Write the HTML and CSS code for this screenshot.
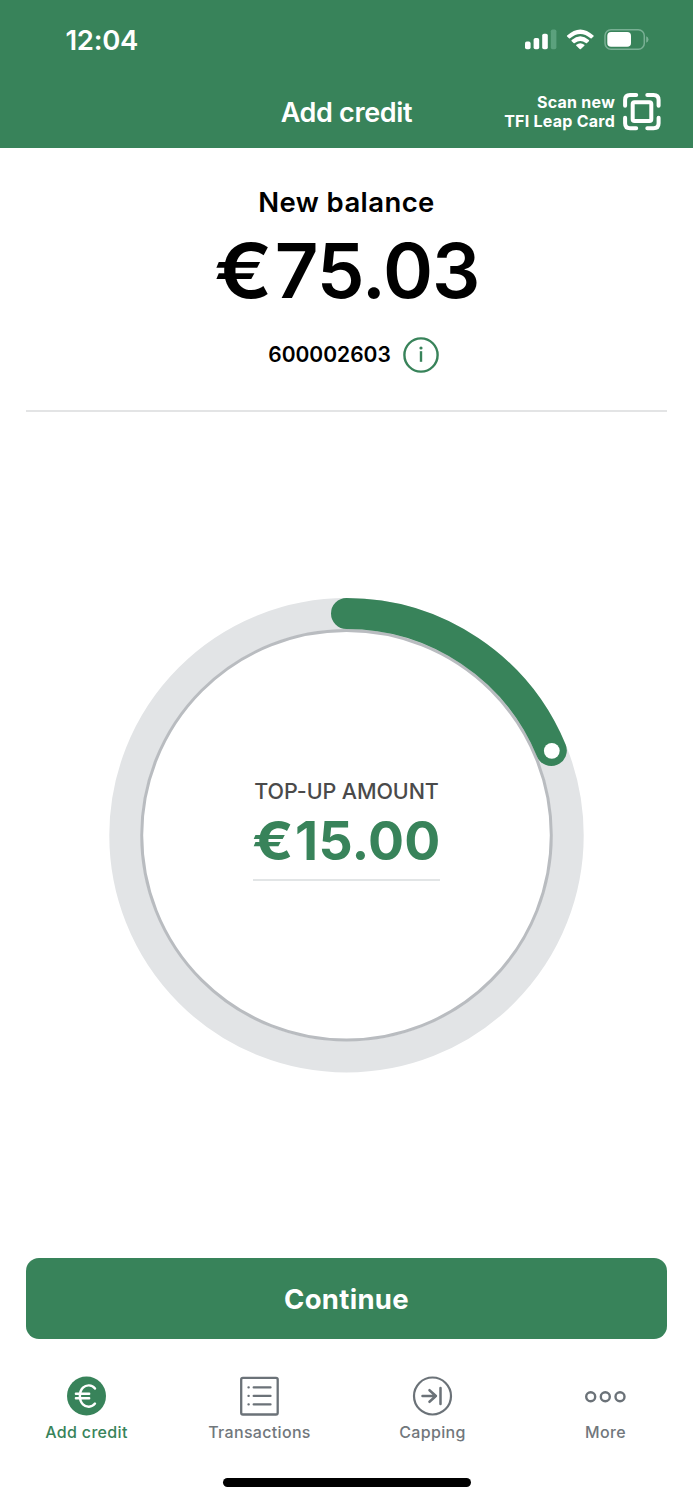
FILE: index.html
```html
<!DOCTYPE html>
<html lang="en">
<head>
<meta charset="utf-8">
<title>Add credit</title>
<link rel="stylesheet" href="styles.css">
</head>
<body>
<div class="app">
  <header class="header">
    <div class="status-bar">
      <span class="time">12:04</span>
      <svg class="status-icons" width="126" height="26" viewBox="524 27 126 26" fill="#fff">
        <rect x="525" y="41.6" width="5.6" height="7.6" rx="1.8"/>
        <rect x="533.6" y="38" width="5.6" height="11.2" rx="1.8"/>
        <rect x="542.2" y="33.8" width="5.6" height="15.4" rx="1.8"/>
        <rect x="550.8" y="29.4" width="5.6" height="19.8" rx="1.8" fill="#5ba17d"/>
        <path d="M567.1 35.4Q580.3 23.4 593.5 35.4Q594 36 593.5 36.6L591.7 38.3Q591.1 38.8 590.5 38.3Q580.3 29.7 570.1 38.3Q569.5 38.8 568.9 38.3L567.1 36.6Q566.6 36 567.1 35.4Z"/>
        <path d="M571.7 40Q580.3 32.7 588.9 40Q589.5 40.6 588.9 41.2L587 43Q586.4 43.5 585.8 43Q580.3 38.8 574.8 43Q574.2 43.5 573.6 43L571.7 41.2Q571.1 40.6 571.7 40Z"/>
        <path d="M576.3 44.8Q580.3 41.6 584.3 44.8Q584.8 45.3 584.3 45.8L580.9 49Q580.3 49.5 579.7 49L576.3 45.8Q575.8 45.3 576.3 44.8Z"/>
        <rect x="605" y="29.7" width="39.3" height="19.5" rx="6" fill="none" stroke="#79b094" stroke-width="1.5"/>
        <rect x="607.3" y="32" width="23.7" height="14.8" rx="3.8"/>
        <path d="M646.2 36.3Q648.5 37.3 648.5 39.5T646.2 42.7Z" fill="#79b094"/>
      </svg>
    </div>
    <div class="title-bar">
      <h1 class="title">Add credit</h1>
      <button class="scan">
        <span class="scan-label">Scan new<br>TFI Leap Card</span>
        <svg class="scan-icon" width="38" height="38" viewBox="623 93 38 38" fill="none" stroke="#fff" stroke-width="4" stroke-linecap="round">
          <path d="M636.2 95.1H630Q625.1 95.1 625.1 100V105.8M647.3 95.1H653.5Q658.6 95.1 658.6 100V105.8M636.2 128.2H630Q625.1 128.2 625.1 123.2V117.8M647.3 128.2H653.5Q658.6 128.2 658.6 123.2V117.8"/>
          <rect x="632.7" y="102.2" width="18.6" height="18.8" rx="1.8"/>
        </svg>
      </button>
    </div>
  </header>

  <main class="main">
    <section class="balance">
      <h2 class="balance-title">New balance</h2>
      <div class="balance-value"><span class="currency">€</span>75.03</div>
      <div class="card-row">
        <span class="card-number">600002603</span>
        <svg class="info" width="36" height="36" viewBox="0 0 36 36">
          <circle cx="18" cy="18" r="16.6" fill="none" stroke="#38835a" stroke-width="2.4"/>
          <circle cx="18" cy="11" r="1.6" fill="#38835a"/>
          <path d="M18 14.2V24.8" stroke="#38835a" stroke-width="2.4"/>
        </svg>
      </div>
    </section>

    <section class="dial">
      <svg class="ring" width="477" height="476" viewBox="108 597 477 476" fill="none">
        <circle cx="346.5" cy="835.3" r="221.5" stroke="#e2e4e6" stroke-width="31.4"/>
        <circle cx="346.5" cy="835.3" r="204.8" stroke="#b9bcc0" stroke-width="3"/>
        <path d="M346.5 613.5A221.6 221.6 0 0 1 551.3 750.5" stroke="#38835a" stroke-width="31" stroke-linecap="round"/>
        <circle cx="551.8" cy="750.8" r="7.9" fill="#fff"/>
      </svg>
      <div class="amount">
        <span class="amount-label">TOP-UP AMOUNT</span>
        <span class="amount-value"><span class="currency">€</span>15.00</span>
      </div>
    </section>

    <button class="continue">Continue</button>
  </main>

  <nav class="tabs">
    <a class="tab active">
      <svg width="43" height="42" viewBox="-0.5 0 43 42" fill="none">
        <circle cx="21" cy="21" r="19.5" fill="#38835a"/>
        <path d="M29.5 13.5C26.4 9.5 20.7 9.5 17.5 12.7C13.4 16.7 13.3 25.2 17.4 29.3C20.7 32.6 26.4 32.6 29.5 28.6M10.4 18.8H23.7M10.4 23.3H23.7" stroke="#fff" stroke-width="2.4" stroke-linecap="round"/>
      </svg>
      <span class="tab-label">Add credit</span>
    </a>
    <a class="tab">
      <svg width="43" height="42" viewBox="-0.5 0 43 42" fill="none" stroke="#6b7278" stroke-width="2.3" stroke-linecap="round">
        <rect x="2.7" y="2.8" width="36.5" height="36.7" rx="1.7"/>
        <path d="M15.2 12.4H32M15.2 20.9H32M15.2 29.4H32M10 12.4H10.2M10 20.9H10.2M10 29.4H10.2"/>
      </svg>
      <span class="tab-label">Transactions</span>
    </a>
    <a class="tab">
      <svg width="43" height="42" viewBox="-0.5 0 43 42" fill="none" stroke="#6b7278" stroke-width="2.2" stroke-linecap="round" stroke-linejoin="round">
        <circle cx="21" cy="21" r="18.5"/>
        <path d="M11 21H24.4M18 15.2L24.4 21L18 26.8M29 13V29" stroke-width="2.5"/>
      </svg>
      <span class="tab-label">Capping</span>
    </a>
    <a class="tab">
      <svg width="43" height="42" viewBox="-0.5 0 43 42" fill="none" stroke="#6b7278" stroke-width="2.4">
        <circle cx="6.2" cy="21.8" r="4.5"/>
        <circle cx="20.8" cy="21.8" r="4.5"/>
        <circle cx="35.5" cy="21.8" r="4.5"/>
      </svg>
      <span class="tab-label">More</span>
    </a>
  </nav>
  <div class="home-indicator"></div>
</div>
</body>
</html>
```

FILE: styles.css
```css
* { box-sizing: border-box; }

body {
  margin: 0;
  background: #fff;
  color: #000;
  font-family: Inter, "Liberation Sans", sans-serif;
}

button {
  border: 0;
  padding: 0;
  background: none;
  color: inherit;
  font: inherit;
}

h1, h2 { margin: 0; }
svg { display: block; flex: none; }

.app {
  display: flex;
  flex-direction: column;
  width: 693px;
  height: 1500px;
  overflow: hidden;
}

.header {
  height: 147.5px;
  background: #38835a;
  color: #fff;
}

.status-bar {
  display: flex;
  justify-content: space-between;
  align-items: center;
  height: 80px;
  padding: 0 43px 0 65.5px;
}

.time {
  font-size: 27.5px;
  font-weight: 600;
  letter-spacing: -0.3px;
}

.title-bar {
  display: grid;
  grid-template-columns: 1fr auto 1fr;
  align-items: center;
  height: 64px;
  padding: 0 32px;
}

.title {
  grid-column: 2;
  font-size: 27px;
  font-weight: 600;
  letter-spacing: -0.35px;
  white-space: nowrap;
}

.scan {
  display: flex;
  align-items: center;
  justify-content: flex-end;
  gap: 8px;
}

.scan-label {
  font-size: 16px;
  font-weight: 700;
  letter-spacing: 0.25px;
  line-height: 19.5px;
  text-align: right;
  white-space: nowrap;
}

.main {
  display: flex;
  flex-direction: column;
  height: 1191.5px;
  padding: 0 26px;
}

.balance {
  display: flex;
  flex-direction: column;
  align-items: center;
  height: 264px;
  padding-top: 36px;
  border-bottom: 2px solid #e3e4e5;
}

.balance-title {
  font-size: 27.5px;
  font-weight: 600;
  letter-spacing: 0.4px;
  line-height: 36px;
}

.balance-value {
  font-size: 76px;
  font-weight: 600;
  letter-spacing: -1px;
  line-height: 92px;
  margin-top: 4px;
  white-space: nowrap;
}

.currency {
  display: inline-block;
  margin-right: 0.14em;
  transform: scaleX(1.14);
  transform-origin: left;
}

.card-row {
  display: flex;
  align-items: center;
  gap: 12px;
  margin: 21px 0 0 14px;
}

.card-number {
  font-size: 21px;
  font-weight: 600;
}

.dial {
  display: grid;
  place-items: center;
  flex: 1;
}

.ring, .amount { grid-area: 1 / 1; }

.amount {
  display: flex;
  flex-direction: column;
  align-items: center;
  width: 187px;
  margin-bottom: 12px;
  border-bottom: 2px solid #e2e5e6;
}

.amount-label {
  color: #4a4a4a;
  font-size: 21.5px;
  font-weight: 500;
  letter-spacing: -0.1px;
  line-height: 29px;
  white-space: nowrap;
}

.amount-value {
  color: #38835a;
  font-size: 53.5px;
  font-weight: 700;
  letter-spacing: 0.2px;
  line-height: 70px;
  padding-bottom: 3px;
  white-space: nowrap;
}

.amount-value .currency { margin-right: 0.11em; }

.continue {
  height: 81px;
  border-radius: 13px;
  background: #38835a;
  color: #fff;
  font-size: 27.5px;
  font-weight: 700;
  letter-spacing: 0.3px;
}

.tabs {
  display: grid;
  grid-template-columns: repeat(4, 173px);
  height: 139px;
  padding-top: 36px;
}

.tab {
  display: flex;
  flex-direction: column;
  align-items: center;
  color: #71777c;
  font-size: 16px;
  font-weight: 500;
  letter-spacing: 0.32px;
  line-height: 20px;
}

.tab-label { margin-top: 5px; }
.active { color: #38835a; }

.home-indicator {
  align-self: center;
  width: 248px;
  height: 8.5px;
  border-radius: 5px;
  background: #000;
}
```
